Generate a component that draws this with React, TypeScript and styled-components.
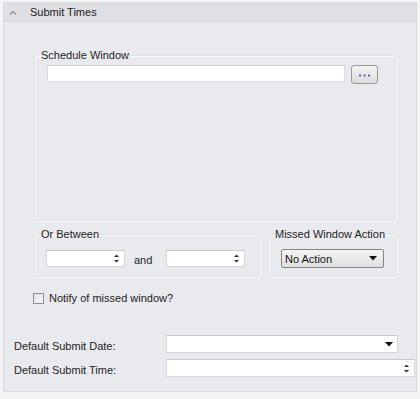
import React from "react";
import styled, { createGlobalStyle } from "styled-components";

const GlobalStyle = createGlobalStyle`
  html, body {
    margin: 0;
    padding: 0;
    background: #f4f4f6;
  }
  body {
    font-family: "Liberation Sans", Arial, sans-serif;
    font-size: 11px;
    color: #1e1e1e;
  }
`;

function UpDown() {
  return (
    <SpinArrows width="7" height="11" viewBox="0 0 7 11">
      <path d="M3.5 1.5 L6 4 L1 4 Z" fill="#333" />
      <path d="M1 7 L6 7 L3.5 9.5 Z" fill="#333" />
    </SpinArrows>
  );
}

function DownArrow() {
  return (
    <svg width="8" height="5" viewBox="0 0 8 5">
      <path d="M0 0 L8 0 L4 4.5 Z" fill="#111" />
    </svg>
  );
}

export default function App() {
  return (
    <>
      <GlobalStyle />
      <Page>
        <Panel>
          <Header>
            <svg width="8" height="5" viewBox="0 0 8 5">
              <polyline points="1,4.5 4,1.5 7,4.5" fill="none" stroke="#8a8b90" strokeWidth="1.2" />
            </svg>
            <HeaderTitle>Submit Times</HeaderTitle>
          </Header>
          <Body>
            <Group $width={362}>
              <Legend>Schedule Window</Legend>
              <ScheduleInner>
                <TextBox $width={298} />
                <DotsButton>
                  <svg width="11" height="3" viewBox="0 0 11 3">
                    <rect x="0" y="0.5" width="2" height="2" fill="#6a5a9a" />
                    <rect x="4.5" y="0.5" width="2" height="2" fill="#6a5a9a" />
                    <rect x="9" y="0.5" width="2" height="2" fill="#6a5a9a" />
                  </svg>
                </DotsButton>
              </ScheduleInner>
            </Group>

            <GroupRow>
              <Group $width={226}>
                <Legend>Or Between</Legend>
                <BetweenInner>
                  <SpinBox>
                    <UpDown />
                  </SpinBox>
                  <AndLabel>and</AndLabel>
                  <SpinBox>
                    <UpDown />
                  </SpinBox>
                </BetweenInner>
              </Group>
              <Group $width={129}>
                <Legend>Missed Window Action</Legend>
                <MissedInner>
                  <Dropdown>
                    <span>No Action</span>
                    <DownArrow />
                  </Dropdown>
                </MissedInner>
              </Group>
            </GroupRow>

            <CheckRow>
              <CheckBox />
              <span>Notify of missed window?</span>
            </CheckRow>

            <FormRows>
              <FormRow>
                <FormLabel>Default Submit Date:</FormLabel>
                <Field $width={232}>
                  <DownArrow />
                </Field>
              </FormRow>
              <FormRow>
                <FormLabel>Default Submit Time:</FormLabel>
                <Field $width={249}>
                  <UpDown />
                </Field>
              </FormRow>
            </FormRows>
          </Body>
        </Panel>
      </Page>
    </>
  );
}

const Page = styled.div`
  width: 420px;
  height: 399px;
  padding: 2px 3px 0 3px;
  box-sizing: border-box;
`;

const Panel = styled.div`
  width: 414px;
  height: 390px;
  box-sizing: border-box;
  background: #e9eaee;
  border: 1px solid #dadbdf;
  display: flex;
  flex-direction: column;
`;

const Header = styled.div`
  height: 18px;
  background: #dfe0e4;
  border-bottom: 1px solid #d4d5da;
  display: flex;
  align-items: center;
  padding-left: 5px;
  gap: 13px;
`;

const HeaderTitle = styled.span`
  color: #222;
`;

const Body = styled.div`
  padding: 27px 0 0 30px;
  display: flex;
  flex-direction: column;
`;

const Group = styled.fieldset<{ $width: number }>`
  margin: 0;
  padding: 0;
  width: ${(p) => p.$width}px;
  box-sizing: border-box;
  border: 1px solid #e1e2e6;
  border-radius: 2px;
  box-shadow: inset 1px 1px 0 #f9f9fa, 1px 1px 0 #f9f9fa;
  min-inline-size: 0;
`;

const Legend = styled.legend`
  margin-left: 4px;
  padding: 0 2px;
  line-height: 13px;
  font-size: 11px;
  color: #222;
`;

const ScheduleInner = styled.div`
  height: 155px;
  padding: 3px 0 0 12px;
  display: flex;
  align-items: flex-start;
  gap: 6px;
`;

const TextBox = styled.div<{ $width: number }>`
  width: ${(p) => p.$width}px;
  height: 17px;
  box-sizing: border-box;
  background: #fff;
  border: 1px solid #dcdde1;
  border-top-color: #cfd0d5;
`;

const DotsButton = styled.div`
  width: 27px;
  height: 19px;
  box-sizing: border-box;
  border: 1px solid #9a9b9e;
  border-radius: 3px;
  background: linear-gradient(#f3f3f3, #dcdcdc);
  display: flex;
  align-items: center;
  justify-content: center;
  padding-top: 2px;
`;

const GroupRow = styled.div`
  margin-top: 7px;
  display: flex;
  gap: 8px;
`;

const BetweenInner = styled.div`
  padding: 9px 0 9px 11px;
  display: flex;
  align-items: center;
`;

const SpinBox = styled.div`
  width: 79px;
  height: 17px;
  box-sizing: border-box;
  background: #fff;
  border: 1px solid #d6d7db;
  border-top-color: #c9cace;
  display: flex;
  align-items: center;
  justify-content: flex-end;
  padding-right: 4px;
`;

const SpinArrows = styled.svg`
  display: block;
`;

const AndLabel = styled.span`
  width: 41px;
  padding-left: 9px;
  padding-top: 2px;
  box-sizing: border-box;
`;

const MissedInner = styled.div`
  padding: 8px 0 8px 12px;
`;

const Dropdown = styled.div`
  width: 103px;
  height: 19px;
  box-sizing: border-box;
  border: 1px solid #858689;
  border-radius: 2px;
  background: linear-gradient(#f4f4f4, #e0e0e0);
  display: flex;
  align-items: center;
  justify-content: space-between;
  padding: 0 6px 0 3px;
  color: #111;
`;

const CheckRow = styled.label`
  margin-top: 15px;
  margin-left: -1px;
  display: flex;
  align-items: center;
  gap: 5px;
  color: #222;
`;

const CheckBox = styled.span`
  width: 11px;
  height: 11px;
  box-sizing: border-box;
  border: 1px solid #8f9094;
  background: linear-gradient(135deg, #e0e0e2, #fbfbfc);
`;

const FormRows = styled.div`
  margin: 31px 0 0 -20px;
  display: flex;
  flex-direction: column;
  gap: 6px;
`;

const FormRow = styled.div`
  display: flex;
  align-items: center;
`;

const FormLabel = styled.span`
  width: 152px;
  color: #222;
  padding-top: 4px;
`;

const Field = styled.div<{ $width: number }>`
  width: ${(p) => p.$width}px;
  height: 18px;
  box-sizing: border-box;
  background: #fff;
  border: 1px solid #d6d7db;
  border-top-color: #cacbcf;
  display: flex;
  align-items: center;
  justify-content: flex-end;
  padding-right: 4px;
`;
